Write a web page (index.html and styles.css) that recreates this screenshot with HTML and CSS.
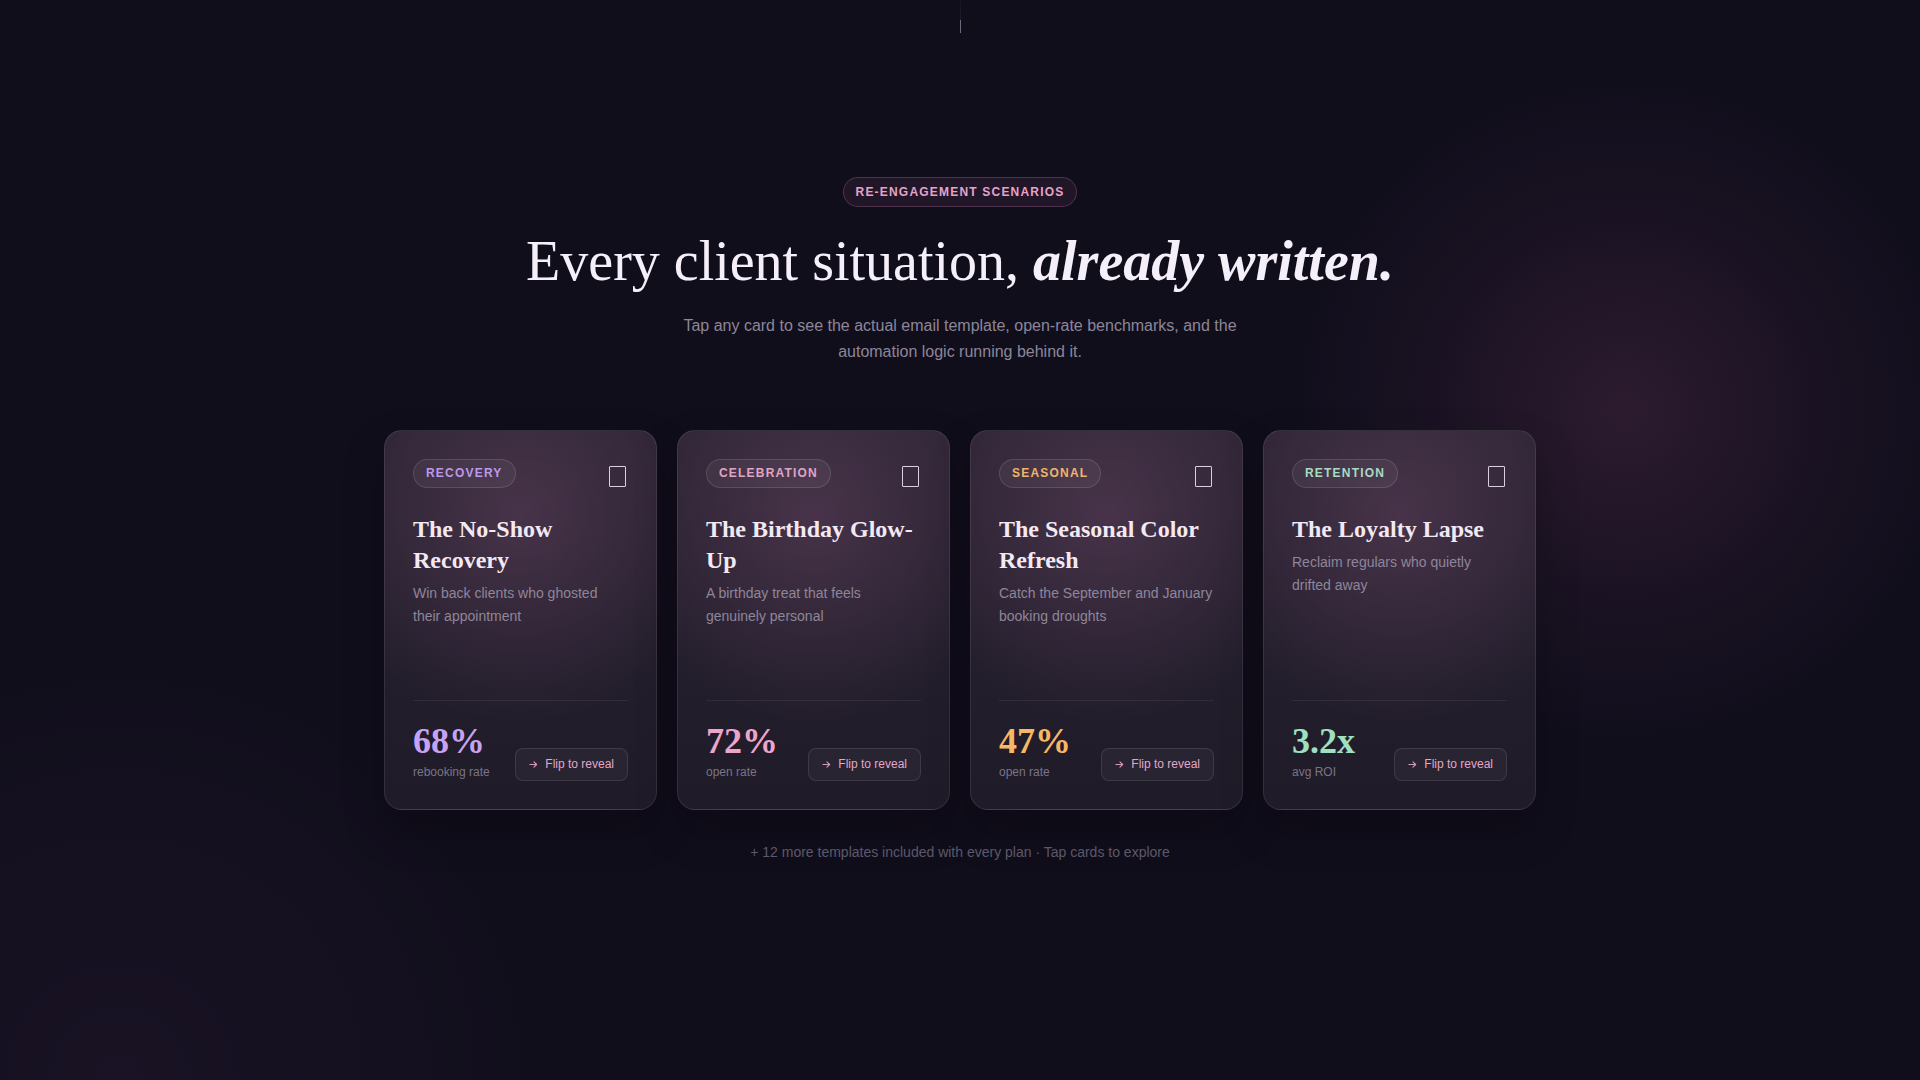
FILE: index.html
```html
<!DOCTYPE html>
<html lang="en">
<head>
<meta charset="utf-8">
<title>Re-engagement scenarios</title>
<link rel="stylesheet" href="styles.css">
</head>
<body>
  <div class="scroll-hint"><span class="trail"></span><span class="tick"></span></div>

  <section class="scenarios">
    <span class="eyebrow">RE-ENGAGEMENT SCENARIOS</span>
    <h1 class="headline">Every client situation, <em>already written.</em></h1>
    <p class="lede">Tap any card to see the actual email template, open-rate benchmarks, and the automation logic running behind it.</p>

    <div class="card-grid">
      <article class="card card--violet">
        <div class="card-top">
          <span class="tag">RECOVERY</span>
          <span class="glyph"></span>
        </div>
        <h2 class="card-title">The No-Show Recovery</h2>
        <p class="card-desc">Win back clients who ghosted their appointment</p>
        <div class="card-foot">
          <div class="stat">
            <span class="stat-value">68%</span>
            <span class="stat-label">rebooking rate</span>
          </div>
          <button class="flip-btn" type="button">
            <svg viewBox="0 0 10 10" width="9" height="9" aria-hidden="true"><path d="M1 5h7.5M5.5 2l3 3-3 3" fill="none" stroke="currentColor" stroke-width="1.2" stroke-linecap="round" stroke-linejoin="round"/></svg>
            Flip to reveal
          </button>
        </div>
      </article>

      <article class="card card--rose">
        <div class="card-top">
          <span class="tag">CELEBRATION</span>
          <span class="glyph"></span>
        </div>
        <h2 class="card-title">The Birthday Glow-Up</h2>
        <p class="card-desc">A birthday treat that feels genuinely personal</p>
        <div class="card-foot">
          <div class="stat">
            <span class="stat-value">72%</span>
            <span class="stat-label">open rate</span>
          </div>
          <button class="flip-btn" type="button">
            <svg viewBox="0 0 10 10" width="9" height="9" aria-hidden="true"><path d="M1 5h7.5M5.5 2l3 3-3 3" fill="none" stroke="currentColor" stroke-width="1.2" stroke-linecap="round" stroke-linejoin="round"/></svg>
            Flip to reveal
          </button>
        </div>
      </article>

      <article class="card card--amber">
        <div class="card-top">
          <span class="tag">SEASONAL</span>
          <span class="glyph"></span>
        </div>
        <h2 class="card-title">The Seasonal Color Refresh</h2>
        <p class="card-desc">Catch the September and January booking droughts</p>
        <div class="card-foot">
          <div class="stat">
            <span class="stat-value">47%</span>
            <span class="stat-label">open rate</span>
          </div>
          <button class="flip-btn" type="button">
            <svg viewBox="0 0 10 10" width="9" height="9" aria-hidden="true"><path d="M1 5h7.5M5.5 2l3 3-3 3" fill="none" stroke="currentColor" stroke-width="1.2" stroke-linecap="round" stroke-linejoin="round"/></svg>
            Flip to reveal
          </button>
        </div>
      </article>

      <article class="card card--mint">
        <div class="card-top">
          <span class="tag">RETENTION</span>
          <span class="glyph"></span>
        </div>
        <h2 class="card-title">The Loyalty Lapse</h2>
        <p class="card-desc">Reclaim regulars who quietly drifted away</p>
        <div class="card-foot">
          <div class="stat">
            <span class="stat-value">3.2x</span>
            <span class="stat-label">avg ROI</span>
          </div>
          <button class="flip-btn" type="button">
            <svg viewBox="0 0 10 10" width="9" height="9" aria-hidden="true"><path d="M1 5h7.5M5.5 2l3 3-3 3" fill="none" stroke="currentColor" stroke-width="1.2" stroke-linecap="round" stroke-linejoin="round"/></svg>
            Flip to reveal
          </button>
        </div>
      </article>
    </div>

    <p class="footnote">+ 12 more templates included with every plan · Tap cards to explore</p>
  </section>
</body>
</html>
```

FILE: styles.css
```css
* { box-sizing: border-box; }

html, body { height: 100%; }

body {
  margin: 0;
  min-height: 1080px;
  font-family: "Liberation Sans", Arial, sans-serif;
  color: #f1ecf6;
  background-color: #110e1c;
  background-image:
    radial-gradient(circle 330px at 1625px 410px, rgba(72, 40, 66, 0.5), rgba(72, 40, 66, 0.18) 55%, rgba(72, 40, 66, 0) 100%),
    radial-gradient(circle 420px at 120px 1080px, rgba(40, 28, 52, 0.35), rgba(40, 28, 52, 0) 100%);
  background-repeat: no-repeat;
}

/* small scroll cue at the top edge */
.scroll-hint {
  display: flex;
  flex-direction: column;
  align-items: center;
  height: 33px;
}
.scroll-hint .trail {
  width: 1px;
  height: 20px;
  background: linear-gradient(180deg, rgba(255, 255, 255, 0.02), rgba(255, 255, 255, 0.07));
}
.scroll-hint .tick {
  width: 1px;
  height: 13px;
  background: #6e6880;
}

.scenarios {
  display: flex;
  flex-direction: column;
  align-items: center;
  padding-top: 144px;
}

.eyebrow {
  display: inline-flex;
  align-items: center;
  height: 30px;
  padding: 0 12px;
  border-radius: 999px;
  border: 1px solid rgba(232, 150, 200, 0.22);
  background: rgba(200, 110, 170, 0.09);
  color: #e6a3c8;
  font-size: 12px;
  font-weight: 700;
  letter-spacing: 0.1em;
}

.headline {
  margin: 22px 0 0;
  font-family: "Liberation Serif", "Times New Roman", serif;
  font-weight: 400;
  font-size: 56px;
  line-height: 64px;
  color: #f4eff8;
}
.headline em {
  font-style: italic;
  font-weight: 700;
}

.lede {
  margin: 20px 0 0;
  max-width: 570px;
  text-align: center;
  font-size: 16px;
  line-height: 1.65;
  color: #8c8698;
}

.card-grid {
  display: grid;
  grid-template-columns: repeat(4, 1fr);
  gap: 20px;
  width: 1152px;
  margin-top: 64px;
}

.card {
  display: flex;
  flex-direction: column;
  height: 380px;
  padding: 28px;
  border-radius: 18px;
  border: 1px solid rgba(255, 255, 255, 0.09);
  background:
    radial-gradient(ellipse 75% 55% at 50% 22%, rgba(120, 78, 112, 0.4), rgba(120, 78, 112, 0) 100%),
    linear-gradient(180deg, #2a2332 0%, #231e2c 60%, #1f1b28 100%);
  box-shadow: 0 20px 40px rgba(0, 0, 0, 0.25);
}

.card-top {
  display: flex;
  align-items: center;
  justify-content: space-between;
  height: 29px;
}

.tag {
  display: inline-flex;
  align-items: center;
  height: 29px;
  padding: 0 12px;
  border-radius: 999px;
  border: 1px solid rgba(255, 255, 255, 0.12);
  background: rgba(255, 255, 255, 0.05);
  font-size: 12px;
  font-weight: 700;
  letter-spacing: 0.1em;
}

/* placeholder icon box */
.glyph {
  width: 17px;
  height: 21px;
  margin: 6px 2px 0 0;
  border: 1.5px solid #d9d0e2;
  border-radius: 1px;
}

.card-title {
  margin: 26px 0 0;
  font-family: "Liberation Serif", "Times New Roman", serif;
  font-weight: 700;
  font-size: 24px;
  line-height: 1.3;
  color: #f3e9f3;
}

.card-desc {
  margin: 6px 0 0;
  font-size: 14px;
  line-height: 1.65;
  color: #8e8699;
}

.card-foot {
  margin-top: auto;
  display: flex;
  align-items: flex-end;
  justify-content: space-between;
  padding-top: 22px;
  border-top: 1px solid rgba(255, 255, 255, 0.07);
}

.stat {
  display: flex;
  flex-direction: column;
  gap: 5px;
}
.stat-value {
  font-family: "Liberation Serif", "Times New Roman", serif;
  font-weight: 700;
  font-size: 36px;
  line-height: 1;
}
.stat-label {
  font-size: 12px;
  line-height: 1.4;
  color: #7b7487;
}

.flip-btn {
  display: inline-flex;
  align-items: center;
  gap: 7px;
  height: 33px;
  padding: 0 13px;
  border-radius: 8px;
  border: 1px solid rgba(255, 255, 255, 0.1);
  background: rgba(255, 255, 255, 0.04);
  color: #e3a6c9;
  font-family: "Liberation Sans", Arial, sans-serif;
  font-size: 12px;
  cursor: pointer;
}
.flip-btn svg { color: #d699bd; }

.card--violet .tag { color: #bd98ec; }
.card--violet .stat-value { color: #c7a3f3; }

.card--rose .tag { color: #e0a4c6; }
.card--rose .stat-value { color: #eea5cb; }

.card--amber .tag { color: #eeb56c; }
.card--amber .stat-value { color: #f6b766; }

.card--mint .tag { color: #a7dbc4; }
.card--mint .stat-value { color: #9fe0c2; }

.footnote {
  margin: 31px 0 0;
  font-size: 14px;
  line-height: 1.6;
  color: #5d5869;
}
```
